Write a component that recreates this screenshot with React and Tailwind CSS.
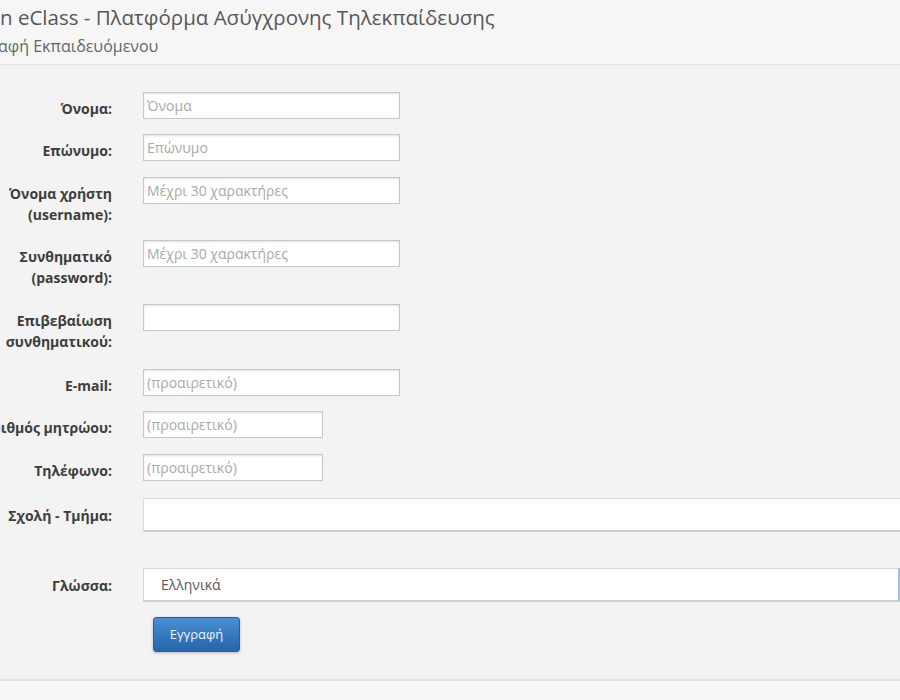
import React from "react";

const font = { fontFamily: '"Open Sans", "Noto Sans", sans-serif' };

function Label({ lines, pt = "pt-[6px]" }) {
  return (
    <div className={`w-[112px] shrink-0 flex flex-col items-end ${pt}`}>
      {lines.map((l) => (
        <div
          key={l}
          className="flex justify-end w-full whitespace-nowrap text-[14px] leading-[21px] font-bold text-[#3d3d3d]"
        >
          <span>{l}</span>
        </div>
      ))}
    </div>
  );
}

function TextInput({ placeholder, w = "w-[257px]" }) {
  return (
    <input
      type="text"
      placeholder={placeholder}
      className={`${w} h-[27px] ml-[31px] shrink-0 bg-white border border-[#c3c8ce] shadow-[inset_0_1px_2px_rgba(0,0,0,0.12)] px-[3px] text-[14px] text-[#444] placeholder:text-[#a9a9a9] outline-none`}
      style={font}
    />
  );
}

export default function App() {
  return (
    <div className="w-[900px] h-[700px] overflow-hidden bg-[#f3f3f3]" style={font}>
      {/* page heading */}
      <div className="bg-[#f6f6f6] pt-[4px] pb-[8px] border-b border-[#e2e2e2]">
        <div className="text-[20.5px] leading-[27px] text-[#575757] whitespace-nowrap">
          n eClass - Πλατφόρμα Ασύγχρονης Τηλεκπαίδευσης
        </div>
        <div className="mt-[5px] text-[16px] leading-[20px] text-[#666] whitespace-nowrap -ml-[2px]">
          αφή Εκπαιδευόμενου
        </div>
      </div>

      {/* registration form */}
      <form className="pt-[27px]">
        <div className="flex items-start">
          <Label lines={["Όνομα:"]} />
          <TextInput placeholder="Όνομα" />
        </div>
        <div className="flex items-start mt-[15px]">
          <Label lines={["Επώνυμο:"]} />
          <TextInput placeholder="Επώνυμο" />
        </div>
        <div className="flex items-start mt-[16px]">
          <Label lines={["Όνομα χρήστη", "(username):"]} />
          <TextInput placeholder="Μέχρι 30 χαρακτήρες" />
        </div>
        <div className="flex items-start mt-[15px]">
          <Label lines={["Συνθηματικό", "(password):"]} />
          <TextInput placeholder="Μέχρι 30 χαρακτήρες" />
        </div>
        <div className="flex items-start mt-[16px]">
          <Label lines={["Επιβεβαίωση", "συνθηματικού:"]} />
          <TextInput placeholder="" />
        </div>
        <div className="flex items-start mt-[17px]">
          <Label lines={["E-mail:"]} />
          <TextInput placeholder="(προαιρετικό)" />
        </div>
        <div className="flex items-start mt-[15px]">
          <Label lines={["Αριθμός μητρώου:"]} />
          <TextInput placeholder="(προαιρετικό)" w="w-[180px]" />
        </div>
        <div className="flex items-start mt-[16px]">
          <Label lines={["Τηλέφωνο:"]} />
          <TextInput placeholder="(προαιρετικό)" w="w-[180px]" />
        </div>
        <div className="flex items-start mt-[17px]">
          <Label lines={["Σχολή - Τμήμα:"]} pt="pt-[7px]" />
          <div className="ml-[31px] w-[780px] h-[34px] shrink-0 bg-white border border-[#dcdcdc] border-b-[#cfcfcf] border-b-2" />
        </div>
        <div className="flex items-start mt-[36px]">
          <Label lines={["Γλώσσα:"]} pt="pt-[7px]" />
          <div className="ml-[31px] w-[757px] h-[34px] shrink-0 bg-white border border-[#d6d6d6] border-b-[#cfcfcf] border-b-2 border-r-[#a9bde0] border-r-2 flex items-center pl-[17px] text-[14px] text-[#5a5a5a]">
            Ελληνικά
          </div>
        </div>
        <div className="mt-[15px] ml-[153px]">
          <button
            type="button"
            className="w-[87px] h-[35px] rounded-[3px] bg-gradient-to-b from-[#4a8fd3] to-[#2465ab] border border-[#23609f] text-[#eef4fb] text-[13px] shadow-[0_1px_3px_rgba(0,0,0,0.25)]"
            style={font}
          >
            Εγγραφή
          </button>
        </div>
        <div className="mt-[27px] border-t-2 border-[#e3e3e3] bg-[#f8f8f8] h-[40px]" />
      </form>
    </div>
  );
}
